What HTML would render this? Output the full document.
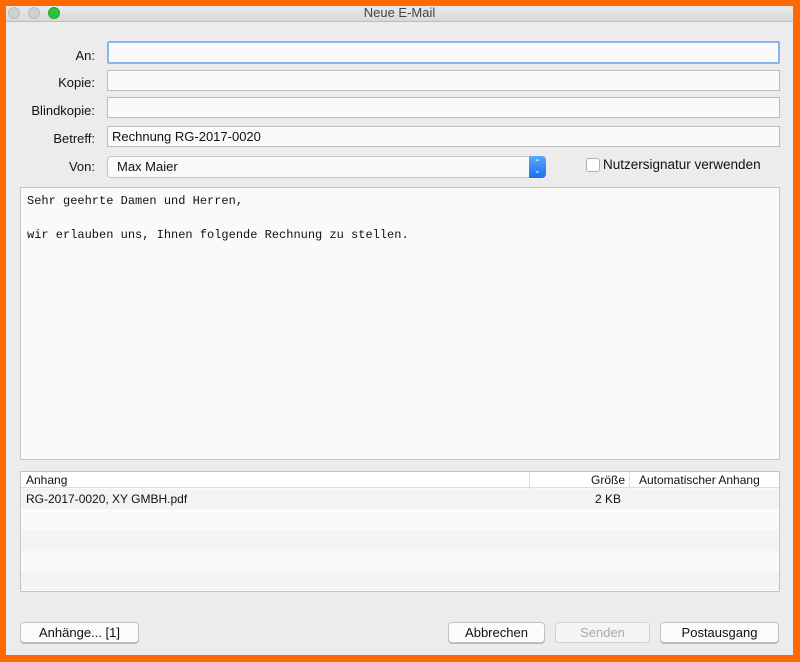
<!DOCTYPE html>
<html><head><meta charset="utf-8"><style>
*{box-sizing:border-box;margin:0;padding:0}
body{width:800px;height:662px;background:#fe6a00;position:relative;font-family:"Liberation Sans",sans-serif;font-size:13px;color:#111;overflow:hidden}
.win{position:absolute;left:6px;top:6px;width:787px;height:649px;background:#ececec}
.tb{position:absolute;left:0;top:0;width:100%;height:16px;background:linear-gradient(#ebebeb,#d8d8d8);border-bottom:1px solid #bdbdbd;text-align:center;font-size:13px;line-height:13px;color:#444}
.dot{position:absolute;top:1px;width:12px;height:12px;border-radius:50%;background:#d0d0d0;border:1px solid #bcbcbc}
.a{position:absolute}
.lbl{position:absolute;right:698px;text-align:right;font-size:13px}
.in{position:absolute;left:101px;width:673px;height:21px;background:#fafafa;border:1px solid #bcbcbc}
.btn{position:absolute;top:616px;height:21px;background:#fbfbfb;border:1px solid #c2c2c2;border-radius:4px;text-align:center;line-height:19px;font-size:13px;box-shadow:0 1px 0 #b8b8b8}
</style></head><body>
<div class="win">
<div class="tb">Neue E-Mail
<div class="dot" style="left:2px"></div><div class="dot" style="left:22px"></div><div class="dot" style="left:42px;background:#2bc33d;border-color:#22a530"></div></div>
<div class="lbl" style="top:42px">An:</div>
<div class="in" style="top:35px;height:23px;border:2px solid #8ab5ea;border-radius:2px"></div>
<div class="lbl" style="top:69px">Kopie:</div>
<div class="in" style="top:64px"></div>
<div class="lbl" style="top:97px">Blindkopie:</div>
<div class="in" style="top:91px"></div>
<div class="lbl" style="top:125px">Betreff:</div>
<div class="in" style="top:120px;padding-left:4px;line-height:19px">Rechnung RG-2017-0020</div>
<div class="lbl" style="top:153px">Von:</div>
<div class="a" style="left:101px;top:150px;width:439px;height:22px;background:#fafafa;border:1px solid #c4c4c4;border-radius:4px;padding-left:9px;line-height:20px">Max Maier
<div class="a" style="right:-1px;top:-1px;width:17px;height:22px;background:linear-gradient(#5aa8fb,#1a6ff0);border-radius:0 4px 4px 0;color:#fff;font-size:8px;line-height:8px;text-align:center;padding-top:3px">⌃<br>⌄</div></div>
<div class="a" style="left:580px;top:152px;width:14px;height:14px;border:1px solid #b0b0b0;border-radius:3px;background:#fff"></div>
<div class="a" style="left:597px;top:151px;font-size:13.5px">Nutzersignatur verwenden</div>
<div class="a" style="left:14px;top:181px;width:760px;height:273px;background:#fafafa;border:1px solid #c4c4c4;font-family:'Liberation Mono',monospace;font-size:12px;padding:5px 6px;line-height:17px;white-space:pre">Sehr geehrte Damen und Herren,

wir erlauben uns, Ihnen folgende Rechnung zu stellen.</div>
<div class="a" style="left:14px;top:465px;width:760px;height:121px;background:#fafafa;border:1px solid #c4c4c4;font-size:12px;overflow:hidden">
<div class="a" style="left:0;top:0;width:100%;height:16px;border-bottom:1px solid #ddd;background:#fff"></div>
<div class="a" style="left:5px;top:1px">Anhang</div>
<div class="a" style="left:508px;top:0;height:37px;border-left:1px solid #ddd"></div>
<div class="a" style="left:608px;top:0;height:37px;border-left:1px solid #ddd"></div>
<div class="a" style="left:570px;top:1px">Größe</div>
<div class="a" style="left:618px;top:1px">Automatischer Anhang</div>
<div class="a" style="left:0;top:17px;width:100%;height:20px;background:#f3f3f3"></div>
<div class="a" style="left:5px;top:20px">RG-2017-0020, XY GMBH.pdf</div>
<div class="a" style="left:574px;top:20px">2 KB</div>
<div class="a" style="left:0;top:58px;width:100%;height:21px;background:#f4f4f4"></div>
<div class="a" style="left:0;top:100px;width:100%;height:18px;background:#f4f4f4"></div>
</div>
<div class="btn" style="left:14px;width:119px">Anhänge... [1]</div>
<div class="btn" style="left:442px;width:97px">Abbrechen</div>
<div class="btn" style="left:549px;width:95px;color:#aaa;background:#f4f4f4;border-color:#d2d2d2;box-shadow:none">Senden</div>
<div class="btn" style="left:654px;width:119px">Postausgang</div>
</div>
</body></html>
